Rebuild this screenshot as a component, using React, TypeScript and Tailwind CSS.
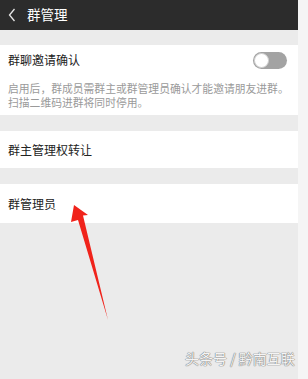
import React from 'react';

const font = { fontFamily: '"Noto Sans CJK SC", "Noto Sans", sans-serif' };

const Toggle = () => (
  <div className="relative h-[17px] w-[34px] rounded-full bg-[#a3a3a3]">
    <div className="absolute left-[1px] top-[1px] h-[15px] w-[15px] rounded-full border border-[#d0d0d0] bg-white" />
  </div>
);

const App = () => {
  return (
    <div className="relative flex h-[379px] w-[308px] overflow-hidden" style={font}>
      <div className="flex w-[298px] flex-col bg-[#ebebeb]">
        {/* en-tête */}
        <div className="flex h-[30px] items-center bg-[#2c2c2c] text-white">
          <div className="flex w-[27px] shrink-0 items-center pl-[8px]">
            <svg width="8" height="14" viewBox="0 0 8 14">
              <path d="M6.5 1 L1.5 7 L6.5 13" fill="none" stroke="#e6e6e6" strokeWidth="1.3" />
            </svg>
          </div>
          <span className="text-[13.5px] leading-none">群管理</span>
        </div>

        <div className="h-[15px]" />

        {/* confirmation d'invitation */}
        <div className="bg-white px-[8px] pb-[6px]">
          <div className="flex h-[30px] items-center justify-between pr-[3px]">
            <span className="text-[12px] text-[#222]">群聊邀请确认</span>
            <Toggle />
          </div>
          <p className="mt-[6px] text-[10.8px] leading-[14px] text-[#9a9a9a]">
            启用后，群成员需群主或群管理员确认才能邀请朋友进群。扫描二维码进群将同时停用。
          </p>
        </div>

        <div className="h-[16px]" />

        <div className="flex h-[37px] items-center bg-white px-[8px]">
          <span className="text-[12px] text-[#222]">群主管理权转让</span>
        </div>

        <div className="h-[16px]" />

        <div className="flex h-[39px] items-center bg-white px-[8px]">
          <span className="text-[12px] text-[#222]">群管理员</span>
        </div>
      </div>
      <div className="flex-1 bg-[#f5f5f5]" />

      {/* flèche rouge */}
      <svg className="absolute left-0 top-0" width="308" height="379" viewBox="0 0 308 379">
        <path d="M74 205 L88 215 L83 215.5 L108 320 L78 220 L71 222 Z" fill="#f0231b" />
      </svg>

      {/* filigrane */}
      <div
        className="absolute left-[185px] top-[351px] text-[14px] leading-none text-[#f4f4f4]"
        style={{ textShadow: '0 0 1px #808080, 0 0 1px #808080, 0 0 1px #808080' }}
      >
        头条号 / 黔南互联
      </div>
    </div>
  );
};

export default App;
